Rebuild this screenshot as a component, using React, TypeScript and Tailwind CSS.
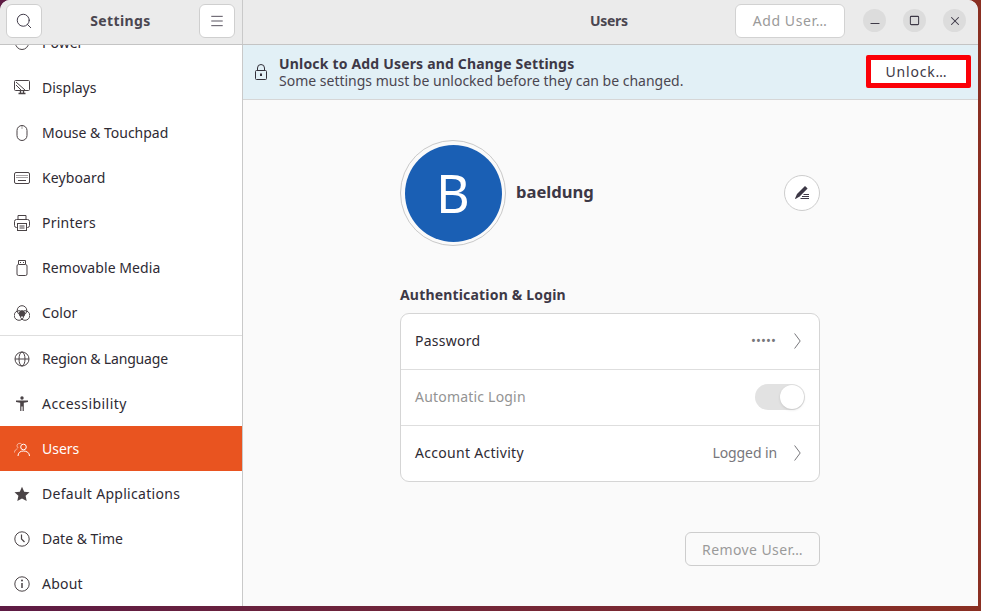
import React from 'react';
import { Search, Menu, Minus, Square, X } from 'lucide-react';

const stroke = '#4a4346';

const IconPower = () => (
  <svg width="16" height="16" viewBox="0 0 16 16" fill="none" stroke={stroke}>
    <circle cx="8" cy="8" r="6.5" />
    <path d="M8 4v4" />
  </svg>
);

const IconDisplays = () => (
  <svg width="16" height="15" viewBox="0 0 16 15" fill="none" stroke={stroke}>
    <rect x="0.5" y="0.5" width="15" height="10" rx="1" />
    <path d="M2 2l9 8M2 5l5 5" />
    <path d="M4.5 13.5h7M6.5 11v2M9.5 11v2" strokeWidth="1.4" />
  </svg>
);

const IconMouse = () => (
  <svg width="16" height="16" viewBox="0 0 16 16" fill="none" stroke={stroke}>
    <rect x="3" y="0.5" width="10" height="15" rx="5" />
    <path d="M8 1v3" strokeOpacity="0.5" />
  </svg>
);

const IconKeyboard = () => (
  <svg width="16" height="12" viewBox="0 0 16 12" fill="none" stroke={stroke}>
    <rect x="0.5" y="0.5" width="15" height="11" rx="1.5" />
    <path d="M2.5 3.5h11M2.5 5.5h11" strokeDasharray="1 1" />
    <path d="M4 8.5h8" />
  </svg>
);

const IconPrinter = () => (
  <svg width="16" height="16" viewBox="0 0 16 16" fill="none" stroke={stroke}>
    <path d="M4 4.5V.5h8v4" />
    <path d="M3.5 12.5h-1a2 2 0 0 1-2-2v-4a2 2 0 0 1 2-2h11a2 2 0 0 1 2 2v4a2 2 0 0 1-2 2h-1" />
    <rect x="3.5" y="8.5" width="9" height="7" />
    <path d="M5.5 11h5M5.5 13h5" />
  </svg>
);

const IconUsb = () => (
  <svg width="16" height="16" viewBox="0 0 16 16" fill="none" stroke={stroke}>
    <rect x="3" y="4.5" width="10" height="11" rx="1.5" />
    <path d="M4.5 4V.5h7V4" />
    <path d="M6 2.5h1M9 2.5h1" />
  </svg>
);

const IconColor = () => (
  <svg width="16" height="16" viewBox="0 0 16 16" fill="none" stroke={stroke}>
    <circle cx="8" cy="5.5" r="4.8" />
    <circle cx="5" cy="10.5" r="4.8" />
    <circle cx="11" cy="10.5" r="4.8" />
    <path d="M8 5.5l3 2-1 3.500H6l-1-3.500z" fill={stroke} />
  </svg>
);

const IconGlobe = () => (
  <svg width="16" height="16" viewBox="0 0 16 16" fill="none" stroke={stroke}>
    <circle cx="8" cy="8" r="7" />
    <ellipse cx="8" cy="8" rx="3" ry="7" />
    <path d="M1 8h14" />
  </svg>
);

const IconAccessibility = () => (
  <svg width="16" height="16" viewBox="0 0 16 16" fill={stroke}>
    <circle cx="8" cy="2" r="1.7" />
    <path d="M2 4.5h12v1.4l-4.2.8V15H8.6v-4.5H7.4V15H6.2V6.7L2 5.9z" />
  </svg>
);

const IconUsers = () => (
  <svg width="16" height="16" viewBox="0 0 16 16" fill="none" stroke="#ffffff">
    <circle cx="9.5" cy="6" r="2.8" />
    <path d="M4 15c0-3.4 2.4-5 5.5-5S15.500 11.600 15.500 15" />
    <path d="M7.500 3A2.700 2.700 0 0 0 3 4.600c0 1 .5 1.900 1.300 2.400M.5 11.500c0-2 1.300-3.300 3-3.700" strokeOpacity="0.55" />
  </svg>
);

const IconStar = () => (
  <svg width="16" height="16" viewBox="0 0 16 16" fill={stroke}>
    <path d="M8 .8l2.200 4.900 5.300.6-3.900 3.500 1.100 5.300L8 12.400l-4.700 2.700 1.100-5.300L.5 6.300l5.300-.6z" />
  </svg>
);

const IconClock = () => (
  <svg width="16" height="16" viewBox="0 0 16 16" fill="none" stroke={stroke}>
    <circle cx="8" cy="8" r="7.2" />
    <path d="M7.500 3.500V8l3 3" strokeWidth="1.2" />
  </svg>
);

const IconInfo = () => (
  <svg width="16" height="16" viewBox="0 0 16 16" fill="none" stroke={stroke}>
    <circle cx="8" cy="8" r="7.2" />
    <path d="M8 7v5" strokeWidth="1.5" />
    <circle cx="8" cy="4.600" r="1" fill={stroke} stroke="none" />
  </svg>
);

const IconLock = () => (
  <svg width="14" height="16" viewBox="0 0 14 16" fill="none" stroke="#33303a">
    <rect x="1.5" y="6.5" width="11" height="9" rx="1" />
    <path d="M3.500 6.500V4a3.500 3.500 0 0 1 7 0v2.500" />
    <rect x="6" y="9.500" width="2" height="2.500" fill="#33303a" stroke="none" />
  </svg>
);

const IconEdit = () => (
  <svg width="16" height="16" viewBox="0 0 16 16" fill="#3d3846">
    <path d="M11 1l2.600 2.400-8 8-4.100 2.600-.5-.5 2-4.500z" />
    <path d="M9.500 9h5.500v1H9.500zM8 11h7v1H8zM6.500 13h8.500v1H6.500z" />
  </svg>
);

const RowChevron = () => (
  <svg className="ml-[17px] shrink-0" width="7" height="16" viewBox="0 0 7 16" fill="none" stroke="#77767b">
    <path d="M.6.500l5.600 7.500-5.600 7.500" />
  </svg>
);

interface NavItem {
  label: string;
  icon: React.ReactNode;
  active?: boolean;
  divider?: boolean;
  spacing?: string;
}

const navItems: NavItem[] = [
  { label: 'Power', icon: <IconPower /> },
  { label: 'Displays', icon: <IconDisplays /> },
  { label: 'Mouse & Touchpad', icon: <IconMouse /> },
  { label: 'Keyboard', icon: <IconKeyboard />, spacing: 'tracking-[0.12px]' },
  { label: 'Printers', icon: <IconPrinter />, spacing: 'tracking-[0.25px]' },
  { label: 'Removable Media', icon: <IconUsb />, spacing: 'tracking-[0.07px]' },
  { label: 'Color', icon: <IconColor />, divider: true },
  { label: 'Region & Language', icon: <IconGlobe />, spacing: 'tracking-[-0.18px]' },
  { label: 'Accessibility', icon: <IconAccessibility />, spacing: 'tracking-[0.45px]' },
  { label: 'Users', icon: <IconUsers />, active: true },
  { label: 'Default Applications', icon: <IconStar />, spacing: 'tracking-[0.3px]' },
  { label: 'Date & Time', icon: <IconClock /> },
  { label: 'About', icon: <IconInfo />, spacing: 'tracking-[0.2px]' },
];

const WindowButton: React.FC<{ children: React.ReactNode }> = ({ children }) => (
  <div className="w-[23px] h-[23px] rounded-full bg-[#dcdcdc] flex items-center justify-center text-[#3d3846]">
    {children}
  </div>
);

export default function App() {
  return (
    <div className="w-[981px] h-[611px] overflow-hidden bg-gradient-to-r from-[#5e1b44] to-[#8a2f22] font-['Noto_Sans',sans-serif] text-[14px] text-[#3d3846]">
      <div className="w-[978px] h-[606px] flex flex-col bg-white rounded-t-[10px] overflow-hidden">
        <header className="h-[45px] shrink-0 flex bg-[#ebebeb] border-b border-[#c4c4c4]">
          <div className="w-[243px] shrink-0 flex items-center justify-between pl-[6px] pr-[7px] pb-[3px] border-r border-[#c9c9c9]">
            <button className="w-[36px] h-[34px] bg-white border border-[#cfcfcf] rounded-[6px] flex items-center justify-center">
              <Search size={18} strokeWidth={1.3} />
            </button>
            <span className="font-bold text-[14px] tracking-[0.4px] text-[#4a4650]">Settings</span>
            <button className="w-[36px] h-[34px] bg-white border border-[#cfcfcf] rounded-[6px] flex items-center justify-center">
              <Menu size={16} strokeWidth={1.3} />
            </button>
          </div>
          <div className="relative flex-1 flex items-center justify-end pr-[12px] pb-[3px] gap-[17px]">
            <span className="absolute left-[347px] font-bold text-[14px] tracking-[-0.3px] text-[#4a4650]">Users</span>
            <button className="w-[110px] h-[34px] mr-[1px] bg-white border border-[#d2d2d2] rounded-[6px] tracking-[0.6px] text-[#9a9a9a]">Add User…</button>
            <WindowButton><Minus className="translate-y-[2.5px]" size={14} strokeWidth={1.7} /></WindowButton>
            <WindowButton><Square size={11} strokeWidth={2.2} /></WindowButton>
            <WindowButton><X size={14} strokeWidth={1.8} /></WindowButton>
          </div>
        </header>
        <div className="flex-1 flex min-h-0">
          <aside className="w-[243px] shrink-0 overflow-hidden bg-white border-r border-[#c9c9c9]">
            <div className="-mt-[25px]">
              {navItems.map((item) => (
                <div key={item.label} className={item.divider ? 'border-b border-[#dedede]' : ''}>
                  <div className={`h-[45px] flex items-center pl-[14px] gap-[12px] ${item.active ? 'bg-[#e95420] text-white' : 'text-[#2e2a33]'}`}>
                    <span className="w-[16px] flex justify-center">{item.icon}</span>
                    <span className={item.spacing}>{item.label}</span>
                  </div>
                </div>
              ))}
            </div>
          </aside>
          <main className="flex-1 min-w-0 bg-[#fafafa] flex flex-col">
            <div className="h-[55px] shrink-0 flex items-center bg-[#e2f0f6] border-b border-[#d6d6d6] pl-[11px] pr-[7px]">
              <IconLock />
              <div className="ml-[11px] flex-1 leading-[17px]">
                <div className="font-bold tracking-[0.18px] text-[#3d3846]">Unlock to Add Users and Change Settings</div>
                <div className="text-[#4a4650]">Some settings must be unlocked before they can be changed.</div>
              </div>
              <button className="w-[105px] h-[33px] mb-[1px] pr-[4px] bg-white border-[5px] border-[#fb0007] rounded-[2px] tracking-[0.8px] text-[#3d3846]">Unlock…</button>
            </div>
            <div className="w-[420px] ml-[157px] flex flex-col">
              <div className="flex items-center mt-[40px] h-[106px]">
                <div className="w-[106px] h-[106px] rounded-full border border-[#c9c9c9] p-[3.5px] shrink-0">
                  <div className="w-full h-full rounded-full bg-[#1a5fb4] text-white flex items-center justify-center text-[52px] leading-none">B</div>
                </div>
                <span className="ml-[10px] mb-[2px] font-bold text-[16.6px] text-[#3d3846]">baeldung</span>
                <button className="ml-auto w-[36px] h-[36px] rounded-full border border-[#cdcdcd] bg-white flex items-center justify-center">
                  <IconEdit />
                </button>
              </div>
              <div className="mt-[39px] font-bold tracking-[0.18px] text-[#3d3846] leading-[20px]">Authentication &amp; Login</div>
              <div className="mt-[8px] bg-white border border-[#d5d5d5] rounded-[9px]">
                <div className="h-[56px] flex items-center pr-[18px] pl-[14px] pb-[2px] border-b border-[#dedede]">
                  <span className="tracking-[0.25px] text-[#2e2a33]">Password</span>
                  <span className="ml-auto w-[26px] text-[13px] leading-none tracking-[0.1px] text-[#77767b]">•••••</span>
                  <RowChevron />
                </div>
                <div className="h-[56px] flex items-center pl-[14px] pr-[14px] pb-[2px] border-b border-[#dedede]">
                  <span className="tracking-[0.2px] text-[#939393]">Automatic Login</span>
                  <div className="ml-auto w-[50px] h-[26px] rounded-full bg-[#e2e2e2] flex items-center justify-end p-[1px]">
                    <div className="w-[24px] h-[24px] rounded-full bg-white shadow-sm" />
                  </div>
                </div>
                <div className="h-[55px] flex items-center pl-[14px] pr-[18px] pb-[2px]">
                  <span className="tracking-[0.3px] text-[#2e2a33]">Account Activity</span>
                  <span className="ml-auto tracking-[-0.1px] text-[#77767b]">Logged in</span>
                  <RowChevron />
                </div>
              </div>
              <div className="mt-[50px] flex justify-end">
                <button className="w-[135px] h-[34px] bg-[#fafafa] border border-[#cdcdcd] rounded-[6px] tracking-[0.4px] text-[#9a9a9a]">Remove User…</button>
              </div>
            </div>
          </main>
        </div>
      </div>
    </div>
  );
}
